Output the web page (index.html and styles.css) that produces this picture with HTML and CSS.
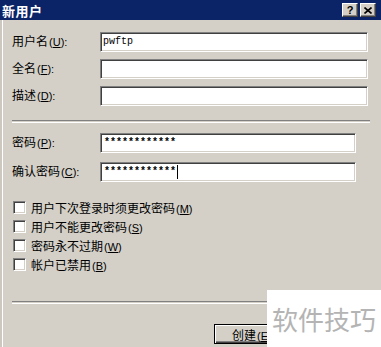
FILE: index.html
```html
<!DOCTYPE html>
<html lang="zh-CN">
<head>
  <meta charset="UTF-8" />
  <title>新用户</title>
  <link rel="stylesheet" href="styles.css">
</head>
<body>

<div class="window">
  <div class="titlebar">
    <span class="title">新用户</span>
    <div class="caption-buttons">
      <span class="cap-btn help">?</span>
      <span class="cap-btn">
        <svg width="8" height="7" viewBox="0 0 8 7"><path d="M0.5 0.5 L7.5 6.5 M7.5 0.5 L0.5 6.5" stroke="#000" stroke-width="1.6"/></svg>
      </span>
    </div>
  </div>

  <div class="content">
    <div class="fields">
      <span class="label">用户名<span class="key">(<u>U</u>):</span></span>
      <span class="input">pwftp</span>
      <span class="label">全名<span class="key">(<u>F</u>):</span></span>
      <span class="input"></span>
      <span class="label">描述<span class="key">(<u>D</u>):</span></span>
      <span class="input"></span>
    </div>

    <div class="sep sep-top"></div>

    <div class="fields fields-pw">
      <span class="label">密码<span class="key">(<u>P</u>):</span></span>
      <span class="input short stars">************</span>
      <span class="label">确认密码<span class="key">(<u>C</u>):</span></span>
      <span class="input short stars">************<span class="caret"></span></span>
    </div>

    <div class="checks">
      <div class="check"><span class="box"></span><span>用户下次登录时须更改密码<span class="key">(<u>M</u>)</span></span></div>
      <div class="check"><span class="box"></span><span>用户不能更改密码<span class="key">(<u>S</u>)</span></span></div>
      <div class="check"><span class="box"></span><span>密码永不过期<span class="key">(<u>W</u>)</span></span></div>
      <div class="check"><span class="box"></span><span>帐户已禁用<span class="key">(<u>B</u>)</span></span></div>
    </div>

    <div class="sep sep-bottom"></div>

    <div class="actions">
      <span class="button"><span class="button-text">创建<span class="key">(<u>E</u>)</span></span></span>
    </div>
  </div>

  <div class="watermark">软件技巧</div>
</div>

</body>
</html>
```

FILE: styles.css
```css
body {
  margin: 0;
  background: #d4d0c8;
  font-family: "Noto Sans CJK SC", "Liberation Sans", sans-serif;
  font-size: 12px;
  color: #000;
}

.window {
  position: relative;
  width: 381px;
  height: 347px;
  overflow: hidden;
  background: #d4d0c8;
}

.titlebar {
  height: 20px;
  display: flex;
  align-items: center;
  justify-content: space-between;
  background: #0b2468;
  padding: 0 5px 0 2px;
}

.title {
  color: #fff;
  font-weight: bold;
  font-size: 13px;
  letter-spacing: 0.5px;
}

.caption-buttons {
  display: flex;
  gap: 2px;
}

.cap-btn {
  width: 16px;
  height: 14px;
  box-sizing: border-box;
  display: flex;
  align-items: center;
  justify-content: center;
  background: #d4d0c8;
  border: 1px solid;
  border-color: #fff #404040 #404040 #fff;
  box-shadow: inset -1px -1px #808080;
}

.cap-btn.help {
  font-family: "Liberation Sans", sans-serif;
  font-weight: bold;
  font-size: 11px;
  line-height: 1;
}

.content {
  height: 327px;
  box-sizing: border-box;
  padding: 11px 0 0 12px;
  box-shadow: inset 2px 0 #ccc8c0, inset 3px 0 #fff;
}

.key {
  font-family: "Liberation Sans", sans-serif;
  font-size: 11px;
  margin-left: 1px;
}

.fields {
  display: grid;
  grid-template-columns: 88px 268px;
  row-gap: 6px;
  align-items: center;
}

.fields-pw {
  grid-template-columns: 88px 256px;
  row-gap: 8px;
  margin-top: 9px;
}

.label {
  line-height: 20px;
}

.input {
  height: 20px;
  box-sizing: border-box;
  display: flex;
  align-items: center;
  padding-left: 2px;
  background: #fff;
  border: 1px solid;
  border-color: #808080 #fff #fff #808080;
  box-shadow: inset 1px 1px #404040, inset -1px -1px #d4d0c8;
  font-family: "Liberation Mono", monospace;
  font-size: 10px;
}

.stars {
  font-weight: bold;
  padding-left: 3px;
}

.caret {
  display: inline-block;
  width: 1px;
  height: 14px;
  background: #000;
  margin-left: 1px;
}

.sep {
  height: 1px;
  border-top: 1px solid #808080;
  border-bottom: 1px solid #fff;
  width: 358px;
}

.sep-top {
  margin-top: 14px;
}

.checks {
  margin-top: 16px;
  display: flex;
  flex-direction: column;
}

.check {
  height: 19px;
  display: flex;
  align-items: center;
  gap: 5px;
}

.box {
  width: 13px;
  height: 13px;
  box-sizing: border-box;
  margin-left: 1px;
  background: #fff;
  border: 1px solid;
  border-color: #808080 #fff #fff #808080;
  box-shadow: inset 1px 1px #404040, inset -1px -1px #d4d0c8;
}

.sep-bottom {
  margin-top: 27px;
}

/* the watermark sits over the right part of this row, so it is cut at x=267 */
.actions {
  margin-top: 20px;
  padding-left: 202px;
  width: 255px;
  box-sizing: border-box;
  overflow: hidden;
  display: flex;
}

.button {
  flex: none;
  width: 75px;
  height: 20px;
  box-sizing: border-box;
  display: flex;
  align-items: center;
  padding-left: 17px;
  background: #d4d0c8;
  border: 1px solid #000;
  box-shadow: inset 1px 1px #fff, inset -1px -1px #404040, inset -2px -2px #808080;
}

.button-text {
  white-space: nowrap;
}

.watermark {
  position: absolute;
  left: 267px;
  top: 290px;
  width: 114px;
  height: 57px;
  background: #fff;
  color: #b4b4b4;
  font-size: 26px;
  display: flex;
  align-items: center;
  justify-content: center;
}
```
